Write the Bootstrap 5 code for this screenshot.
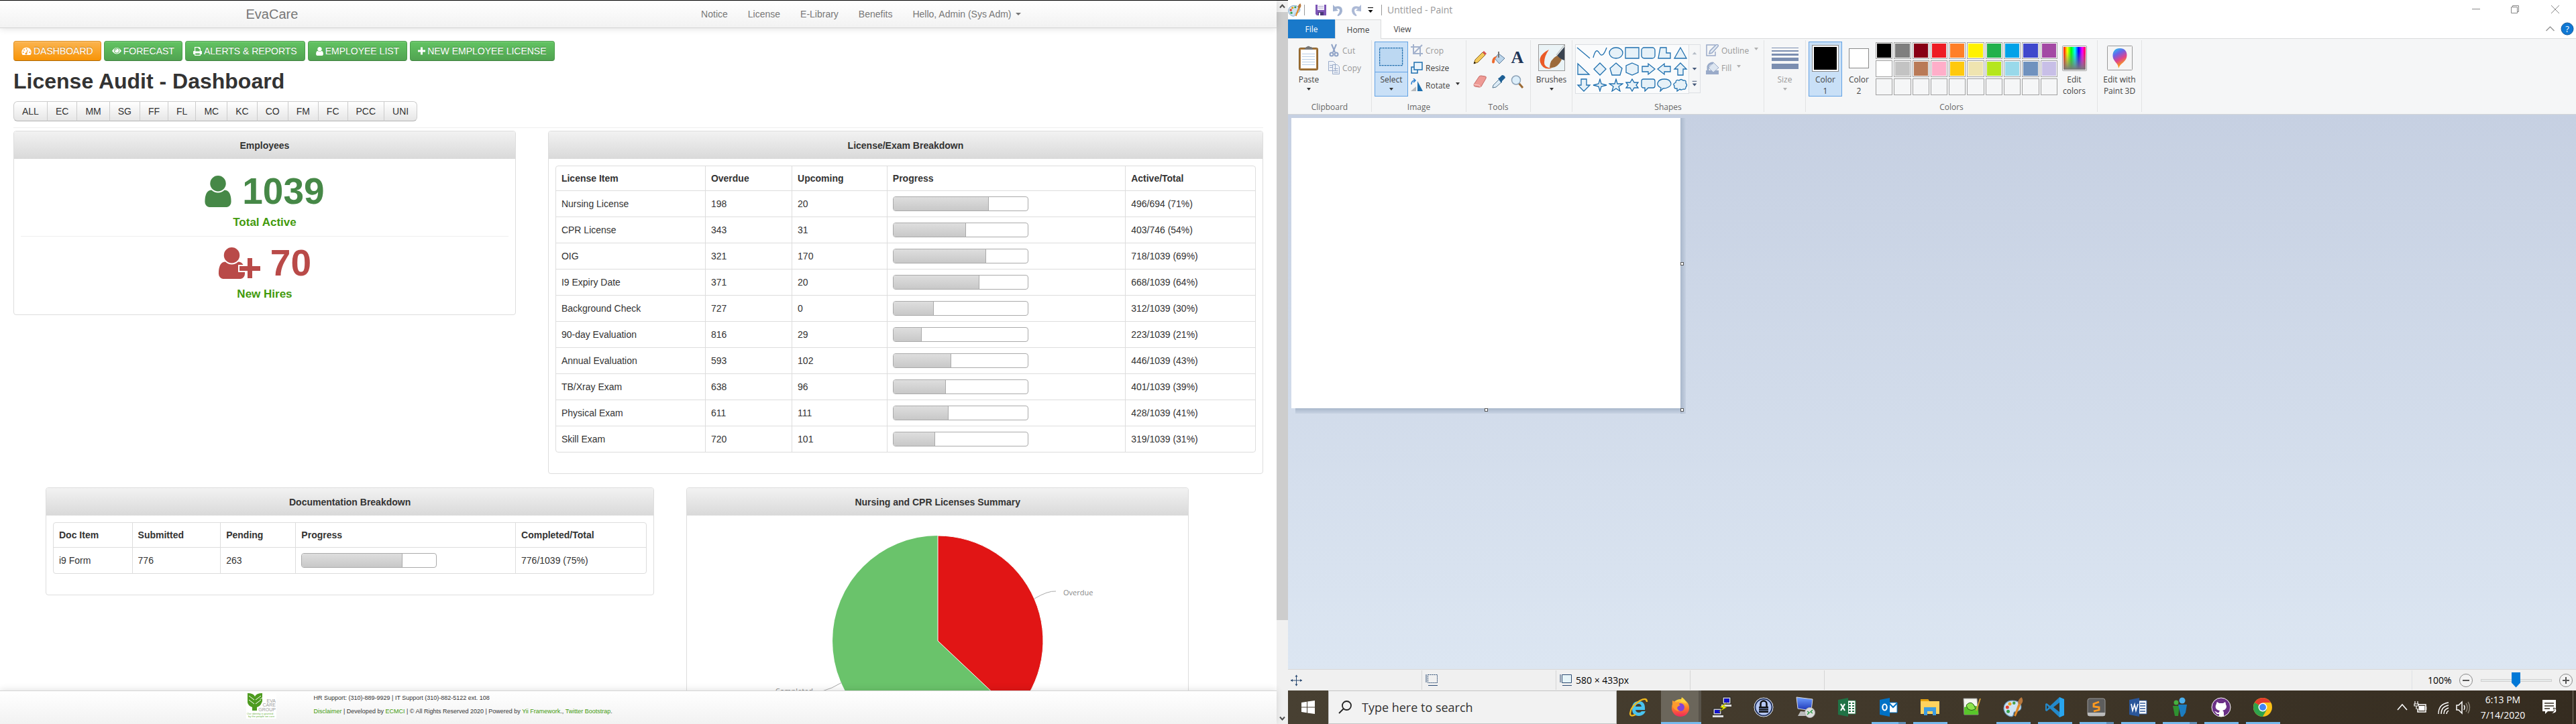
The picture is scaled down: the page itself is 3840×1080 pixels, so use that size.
<!DOCTYPE html>
<html lang="en">
<head>
<meta charset="utf-8">
<meta name="viewport" content="width=device-width, initial-scale=1">
<title>EvaCare - License Audit</title>
<link href="https://cdn.jsdelivr.net/npm/bootstrap@5.3.0/dist/css/bootstrap.min.css" rel="stylesheet">
<script src="https://cdn.jsdelivr.net/npm/bootstrap@5.3.0/dist/js/bootstrap.bundle.min.js"></script>
<style>
html,body{height:100%}
body{font:14px/20px "Liberation Sans",Arial,sans-serif;color:#333;overflow:hidden;background:#fff}
button{font:inherit;color:inherit}
svg{display:block;flex:none}
/* ---------- web application ---------- */
.site{flex:1 1 0;min-width:0;border-top:1px solid #000}
.site-col{min-width:0}
.topbar{height:41px;background:linear-gradient(#fff,#f2f2f2);border-bottom:1px solid #d4d4d4;box-shadow:0 1px 10px rgba(0,0,0,.12);position:relative;z-index:2;padding:0}
.shell{width:100%;max-width:1170px;margin:0 auto}
.topbar .navbar-brand{font-size:20px;line-height:20px;color:#777;padding:0;margin:0}
.topbar .navbar-nav .nav-link{color:#777;padding:10px 15px;font-size:14px}
.dropdown-toggle::after{border-width:4px 4px 0;margin-left:6px;vertical-align:3px}
.stage{overflow:hidden;min-height:0;padding:19px 20px 0}
.actions{gap:4px}
.btn-act{font-size:14px;line-height:20px;padding:4px 11px;border-radius:4px;color:#fff;border:1px solid #4b9e4b;border-bottom-color:#3d803d;background:linear-gradient(#62c462,#51a351);text-shadow:0 -1px 0 rgba(0,0,0,.25);display:flex;align-items:center;gap:3px;box-shadow:inset 0 1px 0 rgba(255,255,255,.2)}
.btn-act.now{background:linear-gradient(#fbb450,#f89406);border-color:#e08f1c;border-bottom-color:#ad6704}
.site h1{font-size:32px;line-height:40px;font-weight:700;margin:10px 0}
.btn-loc{font-size:14px;line-height:20px;padding:4px 12px;border:1px solid #ccc;border-bottom-color:#b3b3b3;background:linear-gradient(#fff,#e6e6e6);color:#333}
.rule{height:1px;background:#eee;margin:9px 0 4px}
.panels{gap:48px;margin-bottom:20px}
.pane{border:1px solid #ddd;border-radius:4px;background:#fff;min-width:0}
.pane h2{font-size:14px;line-height:20px;font-weight:700;margin:0;padding:11px 11px 10px;text-align:center;background:linear-gradient(#f2f2f2,#d9d9d9);border-radius:3px 3px 0 0}
.w-a{width:40.2%}.w-b{flex:1 1 0}.w-c{width:48.7%;margin-left:48px}
.count{font-size:55px;line-height:70px;font-weight:700;display:flex;justify-content:center;align-items:center;gap:16px}
.c-ok{color:#468847}.c-bad{color:#b94a48;gap:14px}
.cap{font-size:17px;line-height:20px;font-weight:700;color:#429a0c;text-align:center;margin-top:2px}
.emp{padding:13px 10px 20px}
.emp .rule{margin:10px 0 4px}
.holder{padding:10px 10px 31px}
.grid-t{width:100%;table-layout:fixed;border:1px solid #ddd;border-radius:4px;border-collapse:separate;border-spacing:0}
.grid-t th,.grid-t td{padding:8px;line-height:20px;border-left:1px solid #ddd;border-top:1px solid #ddd}
.grid-t th{border-top:0}
.grid-t th:first-child,.grid-t td:first-child{border-left:0}
.lic th:nth-child(1){width:21.3%}.lic th:nth-child(2){width:12.4%}.lic th:nth-child(3){width:13.6%}.lic th:nth-child(4){width:34.1%}
.doc th:nth-child(1){width:13.2%}.doc th:nth-child(2){width:14.9%}.doc th:nth-child(3){width:12.7%}.doc th:nth-child(4){width:37.1%}
.grid-t .progress{width:202px;height:22px;border:1px solid #aaa;border-radius:4px;background:#fff}
.grid-t .progress-bar{background:linear-gradient(#dedede,#c8c8c8);border-right:1px solid #aaa}
.foot{height:50px;background:linear-gradient(#fff,#f2f2f2);border-top:1px solid #d4d4d4;box-shadow:0 -1px 10px rgba(0,0,0,.12);position:relative;z-index:2;font-size:9px}
.foot p{margin:0;line-height:20px}
.foot a{color:#429a0c;text-decoration:none}
.scroller{width:17px;background:#f0f0f0}
.scroller i{background:#cdcdcd;flex:908 1 0}
.scroller b{flex:138 1 0}
/* ---------- paint window ---------- */
.paint{flex:1 1 0;min-width:0;font-family:"Open Sans","Noto Sans",sans-serif;font-size:12px;line-height:17px;color:#444}
.title-row{height:29px;background:#fff}
.title-row .ttl{font-size:14px;color:#999}
.v-sep{width:1px;height:16px;background:#999}
.tabs-row{height:28px;background:#fff;position:relative}
.tabs-row button{border:0;background:none;height:28px;padding:0;width:69px;text-align:center}
.tabs-row .t-file{width:70px;background:#1979ca;color:#fff}
.tabs-row .t-home{background:#f5f6f7;border:1px solid #dadbdc;border-bottom:0;height:29px}
.tabs-row .t-view{width:63px}
.ribbon{height:114px;background:#f5f6f7;border-top:1px solid #dadbdc;border-bottom:1px solid #d3d5d8}
.grp{margin:2px 0 3px;padding-top:2px;border-right:1px solid #e2e3e4;display:flex;flex-direction:column;justify-content:space-between}
.grp>footer{text-align:center;color:#666;line-height:14px}
.g-clip{width:125px}.g-image{width:141px}.g-tools{width:96px}.g-one{width:62px}.g-shapes{width:286px}.g-colors{width:435px}.g-3d{width:66px}
.clip-row{padding-left:6px}
.big{border:1px solid transparent;background:none;padding:0;width:50px;height:82px;display:flex;flex-direction:column;align-items:center;flex:none;text-align:center}
.g-3d .big{width:60px}
.big .pic{height:47px;display:flex;align-items:center;justify-content:center;flex:none}
.big.on{background:#c9e0f7;border-color:#62a2e4}
.big.cut-line .pic{border-bottom:1px solid #62a2e4;width:100%;height:45px;margin-bottom:2px}
.tri{width:0;height:0;border:3px solid transparent;border-top:4px solid #333;border-bottom:0;display:inline-block}
.big .tri{margin-top:4px}
.dim{color:#999}.dim .tri{border-top-color:#b0b0b0}
.sm{border:0;background:none;padding:0;height:26px;display:flex;align-items:center;gap:4px}
.sm .tri{margin:0 0 4px 4px}
.toolgrid{display:grid;grid-template-columns:repeat(3,28px);grid-auto-rows:36px;justify-content:center;padding-top:6px}
.toolgrid button,.shp button{border:0;background:none;padding:0;display:flex;align-items:center;justify-content:center}
.shp{display:grid;grid-template-columns:repeat(7,24px);grid-template-rows:repeat(3,24px);border:1px solid #dcdfe3;background:#fafbfc;width:170px;height:74px}
.shp svg{width:22px;height:20px;fill:#e6f1f8;stroke:#1e6fae;stroke-width:1.3}
.shp-s{width:17px;height:73px;border:1px solid #dcdfe3;border-left:0}
.sw{border:1px solid #8a8a8a;padding:2px;background:#fff}
.sw.s-lg{width:40px;height:40px}.sw.s-md{width:30px;height:30px}
.sw i{display:block;width:100%;height:100%;background:#000}
.pal{display:grid;grid-template-columns:repeat(10,1fr);grid-auto-rows:25px;gap:2px;width:271px;padding-top:1px}
.pal button{border:1px solid #a0a0a0;padding:1px;background:#fff;height:25px}
.pal button i{display:block;width:100%;height:100%}
.pal .none{background:#f5f6f7}
.desk{background:linear-gradient(#c6d0e2,#dce6f2);min-height:0;padding:5px}
.sheet{position:relative;width:580px;height:433px;background:#fff}
.sheet::before{content:"";position:absolute;left:100%;top:0;bottom:-8px;width:8px;background:linear-gradient(90deg,#a9b7cb,#c5d0e1)}
.sheet::after{content:"";position:absolute;top:100%;left:6px;right:0;height:8px;background:linear-gradient(#a9b7cb,#c8d3e3)}
.knob{position:absolute;width:5px;height:5px;border:1px solid #555;background:#fff;z-index:1}
.k-r{left:100%;top:215px}.k-b{top:100%;left:288px}.k-c{left:100%;top:100%}
.status{height:32px;background:#f0f0f0;border-top:1px solid #d7d7d7;color:#000;font-size:14px}
.status>div{border-right:1px solid #d5d5d5;width:200px;margin:1px 0;display:flex;align-items:center;gap:5px;padding-left:4px}
.status>.zoomer{border-right:0;width:245px;padding:0 5px 0 23px;gap:0;justify-content:space-between}
.zoomer button{border:0;background:none;padding:0}
.zoomer input{appearance:none;width:106px;height:24px;background:none;margin:0}
.zoomer input::-webkit-slider-runnable-track{height:4px;background:#e7eaea;border:1px solid #d0d0d0}
.zoomer input::-webkit-slider-thumb{appearance:none;width:13px;height:23px;margin-top:-11px;background:#0078d7;clip-path:polygon(0 0,100% 0,100% 70%,50% 100%,0 70%)}
.task{height:50px;background:linear-gradient(90deg,#484032,#41382a 50%,#352c20);color:#fff}
.task button{border:0;background:none;padding:0;width:62px;display:flex;justify-content:center;align-items:center;position:relative}
.task .start{width:60px}
.task .find{width:430px;margin-right:2px;background:#f2f2f2;border:1px solid #c4c4c4;color:#333;padding-left:14px;gap:15px}
.find input{border:0;background:none;font-size:18px;line-height:24px;padding:0;flex:1;min-width:0;outline:0;color:#333}
.find input::placeholder{color:#333;opacity:1}
.task .run::after,.task .multi::after{content:"";position:absolute;bottom:0;left:6px;width:51px;height:3px;background:#76b9ed}
.task .multi::after{background:linear-gradient(90deg,#76b9ed 40px,#5f8fb8 40px)}
.task .front{background:linear-gradient(90deg,transparent 2px,#6b665b 2px,#6b665b 58px,#58534a 58px)}
.task .front::after{left:2px;width:60px}
.task .clock{width:76px;padding-top:2px;font-size:14px;line-height:23px;text-align:center}
.task .tray{width:auto}
.peek{width:5px;border-left:1px solid #7d766a;margin-left:4px}
.ov{overflow:visible}
</style>
</head>
<body class="d-flex">

<svg width="0" height="0" class="position-absolute" aria-hidden="true">
 <defs>
  <symbol id="user" viewBox="0 128 1280 1536"><path d="M1280 1399q0 109-62.5 187t-150.5 78h-854q-88 0-150.5-78t-62.5-187q0-85 8.500-160.500t31.500-152 58.500-131 94-89 134.500-34.500q131 128 313 128t313-128q76 0 134.500 34.500t94 89 58.500 131 31.500 152 8.500 160.500zm-256-887q0 159-112.500 271.500t-271.500 112.500-271.500-112.500-112.500-271.500 112.500-271.500 271.500-112.500 271.500 112.500 112.500 271.500z"/></symbol>
  <linearGradient id="lg1" x2="0" y2="1"><stop stop-color="#6f9fff"/><stop offset="1" stop-color="#1b33b5"/></linearGradient>
  <linearGradient id="ff" x2="0" y2="1"><stop stop-color="#ffd83c"/><stop offset=".5" stop-color="#ff7a2a"/><stop offset="1" stop-color="#f0255e"/></linearGradient>
  <linearGradient id="rb"><stop stop-color="#f00"/><stop offset=".17" stop-color="#ff0"/><stop offset=".35" stop-color="#0f0"/><stop offset=".52" stop-color="#0ff"/><stop offset=".68" stop-color="#00f"/><stop offset=".85" stop-color="#f0f"/><stop offset="1" stop-color="#f03"/></linearGradient>
  <linearGradient id="gy" x2="0" y2="1"><stop offset=".2" stop-color="#888" stop-opacity="0"/><stop offset="1" stop-color="#777"/></linearGradient>
  <linearGradient id="p3" x2=".4" y2="1"><stop stop-color="#20d5ee"/><stop offset=".35" stop-color="#6a63ea"/><stop offset=".65" stop-color="#e0438b"/><stop offset="1" stop-color="#ffb400"/></linearGradient>
  <symbol id="palette" viewBox="0 0 24 24"><path d="M11 4C4 4 0 9 1 15c1 5 5 8 9 8 3 0 2-3 3-5s6 0 8-4C23 8 18 4 11 4z" fill="#cfe3f3" stroke="#6e9cc0"/><circle cx="5" cy="12" r="2" fill="#e23c2e"/><circle cx="8" cy="8" r="2" fill="#e9a21e"/><circle cx="13" cy="7" r="1.800" fill="#43a047"/><circle cx="6" cy="17" r="2" fill="#33a04a"/><path d="M18 8l3 1-6 14-2-1z" fill="#e08a2a"/><path d="M18 8c-1-3 1-6 4-8 2 3 2 6-1 9z" fill="#b9783d"/></symbol>
 </defs>
</svg>

<section class="site d-flex">
 <div class="site-col d-flex flex-column flex-grow-1">
  <nav class="topbar navbar navbar-expand flex-shrink-0">
   <div class="shell d-flex align-items-center justify-content-between">
    <a class="navbar-brand" href="#">EvaCare</a>
    <ul class="navbar-nav">
     <li class="nav-item"><a class="nav-link" href="#">Notice</a></li>
     <li class="nav-item"><a class="nav-link" href="#">License</a></li>
     <li class="nav-item"><a class="nav-link" href="#">E-Library</a></li>
     <li class="nav-item"><a class="nav-link" href="#">Benefits</a></li>
     <li class="nav-item dropdown"><a class="nav-link dropdown-toggle" href="#" data-bs-toggle="dropdown">Hello, Admin (Sys Adm)</a></li>
    </ul>
   </div>
  </nav>

  <main class="stage flex-grow-1">
   <div class="actions d-flex">
    <button class="btn-act now"><svg width="15" height="13" viewBox="0 0 15 13"><path d="M1.500 12a7.200 7.200 0 1 1 12 0z" fill="#fff"/><g fill="#f9a12a"><circle cx="2.700" cy="8" r="1"/><circle cx="4" cy="4.500" r="1"/><circle cx="7.500" cy="3" r="1"/><circle cx="12.300" cy="8" r="1"/><circle cx="7" cy="10" r="1.600"/><path d="M6.700 9.500L9 4.500l.8.300-1.800 5z"/></g></svg>DASHBOARD</button>
    <button class="btn-act"><svg width="14" height="12" viewBox="0 0 14 12"><path d="M0 6q7-10 14 0q-7 9-14 0z" fill="#fff"/><circle cx="7" cy="5.500" r="3.700" fill="none" stroke="#5ab55a"/><path d="M5 5.500a2 2 0 0 1 2-2" fill="none" stroke="#5ab55a"/></svg>FORECAST</button>
    <button class="btn-act"><svg width="13" height="13" viewBox="0 0 13 13"><path d="M2 0h7l2 2v4h1q1 0 1 1v4h-2v2H2v-2H0V7q0-1 1-1h1z" fill="#fff"/><path d="M3.200 1.200H8V3h1.800v3.500H3.200zM3.200 9.500h6.600v2.300H3.200z" fill="#58b158"/></svg>ALERTS &amp; REPORTS</button>
    <button class="btn-act"><svg width="11" height="13" fill="#fff"><use href="#user"/></svg>EMPLOYEE LIST</button>
    <button class="btn-act"><svg width="11" height="12" viewBox="0 0 11 12"><path d="M4 .5h3V4.500h4v3H7v4H4v-4H0v-3h4z" fill="#fff"/></svg>NEW EMPLOYEE LICENSE</button>
   </div>
   <h1>License Audit - Dashboard</h1>
   <div class="btn-group">
    <button class="btn btn-loc">ALL</button><button class="btn btn-loc">EC</button><button class="btn btn-loc">MM</button><button class="btn btn-loc">SG</button><button class="btn btn-loc">FF</button><button class="btn btn-loc">FL</button><button class="btn btn-loc">MC</button><button class="btn btn-loc">KC</button><button class="btn btn-loc">CO</button><button class="btn btn-loc">FM</button><button class="btn btn-loc">FC</button><button class="btn btn-loc">PCC</button><button class="btn btn-loc">UNI</button>
   </div>
   <div class="rule"></div>

   <div class="panels d-flex align-items-start">
    <section class="pane w-a">
     <h2>Employees</h2>
     <div class="emp">
      <div class="count c-ok"><svg width="40" height="47" fill="currentColor"><use href="#user"/></svg><span>1039</span></div>
      <div class="cap">Total Active</div>
      <div class="rule"></div>
      <div class="count c-bad"><svg width="64" height="47" viewBox="0 0 64 47" fill="currentColor"><svg width="41" height="47"><use href="#user"/></svg><path d="M43 15h9v12h12v9H52v11h-9V36H31v-9h12z" stroke="#fff" stroke-width="2"/></svg><span>70</span></div>
      <div class="cap">New Hires</div>
     </div>
    </section>
    <section class="pane w-b">
     <h2>License/Exam Breakdown</h2>
     <div class="holder">
      <table class="grid-t lic">
       <thead><tr><th>License Item</th><th>Overdue</th><th>Upcoming</th><th>Progress</th><th>Active/Total</th></tr></thead>
       <tbody>
        <tr><td>Nursing License</td><td>198</td><td>20</td><td><div class="progress"><div class="progress-bar" style="width:71%"></div></div></td><td>496/694 (71%)</td></tr>
        <tr><td>CPR License</td><td>343</td><td>31</td><td><div class="progress"><div class="progress-bar" style="width:54%"></div></div></td><td>403/746 (54%)</td></tr>
        <tr><td>OIG</td><td>321</td><td>170</td><td><div class="progress"><div class="progress-bar" style="width:69%"></div></div></td><td>718/1039 (69%)</td></tr>
        <tr><td>I9 Expiry Date</td><td>371</td><td>20</td><td><div class="progress"><div class="progress-bar" style="width:64%"></div></div></td><td>668/1039 (64%)</td></tr>
        <tr><td>Background Check</td><td>727</td><td>0</td><td><div class="progress"><div class="progress-bar" style="width:30%"></div></div></td><td>312/1039 (30%)</td></tr>
        <tr><td>90-day Evaluation</td><td>816</td><td>29</td><td><div class="progress"><div class="progress-bar" style="width:21%"></div></div></td><td>223/1039 (21%)</td></tr>
        <tr><td>Annual Evaluation</td><td>593</td><td>102</td><td><div class="progress"><div class="progress-bar" style="width:43%"></div></div></td><td>446/1039 (43%)</td></tr>
        <tr><td>TB/Xray Exam</td><td>638</td><td>96</td><td><div class="progress"><div class="progress-bar" style="width:39%"></div></div></td><td>401/1039 (39%)</td></tr>
        <tr><td>Physical Exam</td><td>611</td><td>111</td><td><div class="progress"><div class="progress-bar" style="width:41%"></div></div></td><td>428/1039 (41%)</td></tr>
        <tr><td>Skill Exam</td><td>720</td><td>101</td><td><div class="progress"><div class="progress-bar" style="width:31%"></div></div></td><td>319/1039 (31%)</td></tr>
       </tbody>
      </table>
     </div>
    </section>
   </div>

   <div class="panels d-flex align-items-start">
    <section class="pane w-c">
     <h2>Documentation Breakdown</h2>
     <div class="holder">
      <table class="grid-t doc">
       <thead><tr><th>Doc Item</th><th>Submitted</th><th>Pending</th><th>Progress</th><th>Completed/Total</th></tr></thead>
       <tbody><tr><td>i9 Form</td><td>776</td><td>263</td><td><div class="progress"><div class="progress-bar" style="width:75%"></div></div></td><td>776/1039 (75%)</td></tr></tbody>
      </table>
     </div>
    </section>
    <section class="pane w-a">
     <h2>Nursing and CPR Licenses Summary</h2>
     <svg class="mx-auto" width="560" height="400" viewBox="94 0 560 400" font-family="Open Sans,sans-serif" font-size="11" fill="#888">
      <circle cx="374" cy="187" r="157" fill="#6ac36b"/>
      <path d="M374 187V30A157 157 0 0 1 488.200 294.700z" fill="#e11515" stroke="#fff"/>
      <path d="M518 124q20-12 32-11M231 249q-14 9-32 14" fill="none" stroke="#aaa"/>
      <text x="561" y="119">Overdue</text><text x="188" y="266" text-anchor="end">Completed</text>
     </svg>
    </section>
   </div>
  </main>

  <footer class="foot flex-shrink-0">
   <div class="shell d-flex">
    <svg width="45" height="42" viewBox="0 0 45 42" font-family="Liberation Sans,sans-serif"><rect width="45" height="39" y="2" fill="#fff"/><path d="M2 3q9 0 11 5Q15 3 24 3v5q0 3-5 4 5 0 5-2v4q0 5-5 5 3 0 4-2-1 5-7 7v5H9v-5q-6-2-7-7z" fill="#4d9b1f"/><path d="M4 7l8 6M4 13l8 6M22 7l-8 6M22 13l-8 6" stroke="#fff" fill="none"/><g font-size="7" fill="#999" text-anchor="end"><text x="44" y="17">EVA</text><text x="44" y="23">CARE</text><text x="44" y="30">GROUP</text></g><g font-size="4" fill="#6cb33f"><text x="1" y="35">Our identity is granted</text><text x="3" y="39">by the people we care</text></g></svg>
    <div class="ms-5 ps-2">
     <p>HR Support: (310)-889-9929 | IT Support (310)-882-5122 ext. 108</p>
     <p><a href="#">Disclaimer</a> | Developed by <a href="#">ECMCI</a> | © All Rights Reserved 2020 | Powered by <a href="#">Yii Framework</a>., <a href="#">Twitter Bootstrap</a>.</p>
    </div>
   </div>
  </footer>
 </div>
 <div class="scroller d-flex flex-column">
  <svg width="17" height="17" fill="none" stroke="#505050" stroke-width="2"><path d="M5 10.500l3.500-4 3.500 4"/></svg><i></i><b></b>
  <svg width="17" height="17" fill="none" stroke="#505050" stroke-width="2"><path d="M5 6.500l3.500 4 3.500-4"/></svg>
 </div>
</section>

<section class="paint d-flex flex-column">
 <header class="title-row d-flex align-items-center flex-shrink-0">
  <svg width="20" height="20"><use href="#palette"/></svg>
  <span class="v-sep ms-1 me-3"></span>
  <svg width="16" height="16"><path d="M0 0h16v16H2l-2-2z" fill="#7d55b5"/><path d="M3 0h10v8H3z" fill="#f4f2fa"/><path d="M4 2.500h8M4 5h8" stroke="#b8b2d0"/><path d="M4 11h8v5H4z" fill="#4a3a78"/><path d="M5 12h2v4H5z" fill="#fff"/></svg>
  <svg class="ms-2" width="19" height="18" fill="#a3b3d1"><path d="M2 1l3 3q11-3 11 6 0 5-6 8-2 0-1-2 3-3 3-6 0-4-5-3l3 3-8 1z"/></svg>
  <svg class="ms-2" width="19" height="18" fill="#adbad6"><path d="M17 1l-3 3Q3 1 3 10q0 5 6 8 2 0 1-2-3-3-3-6 0-4 5-3l-3 3 8 1z"/></svg>
  <svg class="ms-1" width="16" height="12"><path d="M4 2.500h8" stroke="#000"/><path d="M4.500 6h7L8 10z"/></svg>
  <span class="v-sep ms-2 me-2"></span>
  <span class="ttl flex-grow-1">Untitled - Paint</span>
  <svg width="155" height="29" fill="none" stroke="#888"><path d="M0 13.500h12M58.500 10.500h9v9h-9zM60.500 10v-1.500h9v9H68M118 8l12 12M130 8l-12 12"/></svg>
 </header>
 <nav class="tabs-row d-flex flex-shrink-0 align-items-start">
  <button class="t-file">File</button><button class="t-home">Home</button><button class="t-view">View</button>
  <svg class="ms-auto" width="46" height="28"><path d="M1.500 17l6-6 6 6" fill="none" stroke="#999" stroke-width="1.500"/><circle cx="33" cy="14" r="9" fill="#0f78d4" stroke="#15599a"/><text x="33" y="19" fill="#fff" font-size="13" text-anchor="middle">?</text></svg>
 </nav>

 <div class="ribbon d-flex flex-shrink-0">
  <div class="grp g-clip">
   <div class="clip-row d-flex">
    <button class="big"><span class="pic"><svg width="32" height="38"><rect x="1.500" y="3.500" width="28" height="33" rx="2" fill="#a8783e" stroke="#80571f"/><path d="M4 6h23v28H4z" fill="#fff"/><path d="M6 12.500h19M6 16.500h19M6 20.500h19M6 24.500h19M6 28.500h19" stroke="#b8cde4"/><path d="M9 6h14l-3-4h-2a3 3 0 0 0-5 0h-1z" fill="#777"/></svg></span>Paste<span class="tri"></span></button>
    <div class="dim ps-1">
     <button class="sm"><svg width="17" height="20" fill="none" stroke="#8ea2c6" stroke-width="2"><path d="M5 1l5 12M12 1L7 13"/><circle cx="5" cy="16" r="2.500"/><circle cx="12" cy="16" r="2.500"/></svg>Cut</button>
     <button class="sm"><svg width="17" height="20" fill="#eef2f8" stroke="#9aabc9"><path d="M.5.500h7l3 3v11H.5zM6.500 5.500h7l3 3v11h-10z"/><path d="M2 6.500h4M2 9.500h4M8.500 11.500h6M8.500 14.500h6M8.500 17h6"/></svg>Copy</button>
    </div>
   </div>
   <footer>Clipboard</footer>
  </div>
  <div class="grp g-image">
   <div class="d-flex gap-1 ps-1">
    <button class="big on cut-line"><span class="pic"><svg width="36" height="28" fill="#bcd8f2" stroke="#1f6cab" stroke-width="1.300" stroke-dasharray="3 1"><path d="M.6.600h34v26H.6z"/></svg></span>Select<span class="tri"></span></button>
    <div>
     <button class="sm dim"><svg width="18" height="18" fill="none" stroke="#a3b2cd" stroke-width="2"><path d="M4 0v14h14M0 4h14v14M4 14L17 1"/></svg>Crop</button>
     <button class="sm"><svg width="18" height="18" fill="#eaf4fb" stroke="#1e6fae" stroke-width="1.500"><path d="M1 8h9v9H1z"/><path d="M5 1h12v11H5z"/></svg>Resize</button>
     <button class="sm"><svg width="18" height="20"><path d="M10 4v15h8z" fill="#1e6fae"/><path d="M8 12v7H0z" fill="#b5b8bc"/><path d="M1 9q0-6 5-6M4 0l3 3-3 3" fill="none" stroke="#2a7fd0" stroke-width="1.500"/></svg>Rotate<span class="tri"></span></button>
    </div>
   </div>
   <footer>Image</footer>
  </div>
  <div class="grp g-tools">
   <div class="toolgrid">
    <button aria-label="Pencil"><svg width="20" height="20"><path d="M1 19l2-6L14 2l4 4L7 17z" fill="#f3c95b" stroke="#8a6a2a"/><path d="M14 2l2-2 4 4-2 2z" fill="#d9534f"/><path d="M1 19l1-3 2 2z"/></svg></button>
    <button aria-label="Fill with color"><svg width="20" height="20"><path d="M10 4l9 7-8 8-7-8z" fill="#bcd5ea" stroke="#5b7c9c"/><path d="M10 1v9" stroke="#777" stroke-width="2"/><path d="M0 17q0-9 8-9-4 3-4 9-2 3-4 0z" fill="#ed6a2d"/></svg></button>
    <button aria-label="Text"><svg class="ov" width="20" height="30"><text x="10" y="23" font-family="Liberation Serif,serif" font-weight="700" font-size="26" text-anchor="middle" fill="#1d3557">A</text></svg></button>
    <button aria-label="Eraser"><svg width="20" height="20"><path d="M1 14L9 2q1-1 3-1l6 1q2 0 1 3l-7 12q-1 1-3 1l-6-1q-2 0-2-3z" fill="#ee9a95" stroke="#c46a66"/><path d="M1 14l8 1 2 3" fill="none" stroke="#fbd2cf"/></svg></button>
    <button aria-label="Color picker"><svg width="20" height="20"><path d="M1 19l1-4 9-9 4 4-9 8z" fill="#dcebf6" stroke="#55778f"/><path d="M9 5l2-1 4-4q4 0 5 4l-5 5-1 3z" fill="#1d5f94"/></svg></button>
    <button aria-label="Magnifier"><svg width="20" height="20"><path d="M12 12l6 7" stroke="#9b6a34" stroke-width="3"/><circle cx="8" cy="7.500" r="6.500" fill="#dceefa" stroke="#8da3b8" stroke-width="1.500"/></svg></button>
   </div>
   <footer>Tools</footer>
  </div>
  <div class="grp g-one align-items-center">
   <button class="big"><span class="pic"><svg width="40" height="41"><rect x=".5" y=".5" width="39" height="39" fill="#eaf3f6" stroke="#999"/><path d="M16 8Q0 16 3 27q4 12 17 9-12-2-11-9 0-9 7-19z" fill="#ea5a27"/><path d="M39 4v20l-8-3-3-4z" fill="#39424f"/><path d="M28 17l7 6q-7 14-18 12 0-12 11-18z" fill="#9c6b3b"/><path d="M39 1L27 16" stroke="#aaa"/></svg></span>Brushes<span class="tri"></span></button>
  </div>
  <div class="grp g-shapes">
   <div class="d-flex ps-1">
    <div class="shp mt-1">
     <button><svg viewBox="0 0 22 20"><path d="M1 2l19 16"/></svg></button><button><svg viewBox="0 0 22 20"><path d="M1 17q4-16 9-7t11-8" fill="none"/></svg></button><button><svg viewBox="0 0 22 20"><ellipse cx="11" cy="10" rx="10" ry="8"/></svg></button><button><svg viewBox="0 0 22 20"><path d="M1 2h20v16H1z"/></svg></button><button><svg viewBox="0 0 22 20"><rect x="1" y="2" width="20" height="16" rx="4"/></svg></button><button><svg viewBox="0 0 22 20"><path d="M5 2h9v8h6v8H2z"/></svg></button><button><svg viewBox="0 0 22 20"><path d="M11 2l9 16H2z"/></svg></button>
     <button><svg viewBox="0 0 22 20"><path d="M2 2l17 16H2z"/></svg></button><button><svg viewBox="0 0 22 20"><path d="M11 1l9 9-9 9-9-9z"/></svg></button><button><svg viewBox="0 0 22 20"><path d="M11 1l9 8-3 10H5L2 9z"/></svg></button><button><svg viewBox="0 0 22 20"><path d="M11 1l9 4v10l-9 4-9-4V5z"/></svg></button><button><svg viewBox="0 0 22 20"><path d="M2 6h9V2l10 8-10 8v-4H2z"/></svg></button><button><svg viewBox="0 0 22 20"><path d="M20 6h-9V2L1 10l10 8v-4h9z"/></svg></button><button><svg viewBox="0 0 22 20"><path d="M11 1l9 9h-5v9H7v-9H2z"/></svg></button>
     <button><svg viewBox="0 0 22 20"><path d="M11 19l9-9h-5V1H7v9H2z"/></svg></button><button><svg viewBox="0 0 22 20"><path d="M11 1l2 7 8 2-8 2-2 7-2-7-8-2 8-2z"/></svg></button><button><svg viewBox="0 0 22 20"><path d="M11 1l2 7h8l-6 4 2 7-6-4-6 4 2-7-6-4h8z"/></svg></button><button><svg viewBox="0 0 22 20"><path d="M11 1l3 5h6l-3 4 3 4h-6l-3 5-3-5H2l3-4-3-4h6z"/></svg></button><button><svg viewBox="0 0 22 20"><path d="M4 1h14q3 0 3 3v7q0 3-3 3h-7l-5 5v-5H4q-3 0-3-3V4q0-3 3-3z"/></svg></button><button><svg viewBox="0 0 22 20"><path d="M6 14C-3 10 1 1 11 1s13 9 6 12q-3 2-8 2l-4 4z"/></svg></button><button><svg viewBox="0 0 22 20"><path d="M4 6q0-5 5-3 3-3 6 0 5-1 4 4 3 3 0 6 0 4-4 3-3 2-5 0l-4 3v-4q-5 1-4-4-3-3 2-5z"/></svg></button>
    </div>
    <svg class="shp-s mt-1" viewBox="0 0 17 73"><path d="M5 14h7l-3.500-4z" fill="#b5bcc6"/><path d="M5 35h7l-3.500 4zM5 60h7l-3.500 4zM5 56h7v1H5z" fill="#45597a"/></svg>
    <div class="dim ps-2">
     <button class="sm"><svg width="19" height="18" fill="none" stroke="#9aabc9" stroke-width="1.500"><path d="M14 1H1v16h13v-6"/><path d="M5 14l1-4L16 0l3 2L9 13z" fill="#e4ebf4"/></svg>Outline<span class="tri"></span></button>
     <button class="sm"><svg width="19" height="20"><path d="M0 14h19v6H0z" fill="#9aabc9"/><path d="M11 2l8 8-8 7-7-7z" fill="#dde6f1" stroke="#9aabc9"/><path d="M3 14V8q2-5 8-5" fill="none" stroke="#9aabc9" stroke-width="3"/></svg>Fill<span class="tri"></span></button>
    </div>
   </div>
   <footer>Shapes</footer>
  </div>
  <div class="grp g-one align-items-center">
   <button class="big dim"><span class="pic"><svg width="40" height="34" fill="#7b8eb0"><path d="M0 1h40v1H0zM0 5h40v2H0zM0 10h40v3H0zM0 16h40v5H0zM0 25h40v8H0z"/></svg></span>Size<span class="tri"></span></button>
  </div>
  <div class="grp g-colors">
   <div class="d-flex ps-1">
    <button class="big on"><span class="pic"><span class="sw s-lg"><i></i></span></span>Color<br>1</button>
    <button class="big"><span class="pic"><span class="sw s-md"></span></span>Color<br>2</button>
    <div class="pal">
     <button><i style="background:#000"></i></button><button><i style="background:#7f7f7f"></i></button><button><i style="background:#880015"></i></button><button><i style="background:#ed1c24"></i></button><button><i style="background:#ff7f27"></i></button><button><i style="background:#fff200"></i></button><button><i style="background:#22b14c"></i></button><button><i style="background:#00a2e8"></i></button><button><i style="background:#3f48cc"></i></button><button><i style="background:#a349a4"></i></button>
     <button><i style="background:#fff"></i></button><button><i style="background:#c3c3c3"></i></button><button><i style="background:#b97a57"></i></button><button><i style="background:#ffaec9"></i></button><button><i style="background:#ffc90e"></i></button><button><i style="background:#efe4b0"></i></button><button><i style="background:#b5e61d"></i></button><button><i style="background:#99d9ea"></i></button><button><i style="background:#7092be"></i></button><button><i style="background:#c8bfe7"></i></button>
     <button class="none"></button><button class="none"></button><button class="none"></button><button class="none"></button><button class="none"></button><button class="none"></button><button class="none"></button><button class="none"></button><button class="none"></button><button class="none"></button>
    </div>
    <button class="big"><span class="pic"><svg width="37" height="38"><rect x=".5" y=".5" width="36" height="37" rx="1" fill="#fff" stroke="#999"/><path d="M2 2h33v34H2z" fill="url(#rb)"/><path d="M2 2h33v34H2z" fill="url(#gy)"/></svg></span>Edit<br>colors</button>
   </div>
   <footer>Colors</footer>
  </div>
  <div class="grp g-3d align-items-center">
   <button class="big"><span class="pic"><svg width="38" height="38"><rect x=".5" y=".5" width="37" height="36" rx="1" fill="#f5f5f5" stroke="#999"/><path d="M19 4c8 0 12 6 10 14-2 7-9 8-12 16 0-7-5-8-8-15C7 10 11 4 19 4z" fill="url(#p3)"/></svg></span>Edit with<br>Paint 3D</button>
  </div>
 </div>

 <main class="desk flex-grow-1"><div class="sheet"><span class="knob k-r"></span><span class="knob k-b"></span><span class="knob k-c"></span></div></main>

 <div class="status d-flex flex-shrink-0">
  <div><svg width="17" height="18" fill="#2b4a72" stroke="#2b4a72"><path d="M8.500 1v16M0 9h17" /><path d="M6.500 3.500h4l-2-3zM6.500 14.500h4l-2 3zM3 7v4L0 9zM14 7v4l3-2z" stroke="none"/></svg></div>
  <div><svg width="20" height="18" fill="none" stroke="#2b4a72"><path d="M2 0v12M5 16.500h14"/><path d="M4.500.500h14v12h-14z" stroke-dasharray="2 1"/></svg></div>
  <div><svg width="20" height="18" fill="none" stroke="#2b4a72"><path d="M2 0v12M5 16.500h14"/><path d="M4.500.500h14v12h-14z" fill="#e6f4f8"/></svg><span>580 × 433px</span></div>
  <div></div>
  <div class="flex-grow-1 border-0"></div>
  <div class="zoomer border-start">
   <label for="zm">100%</label>
   <button aria-label="Zoom out"><svg width="20" height="22"><circle cx="10" cy="11" r="9.500" fill="#f3f3f3" stroke="#888"/><path d="M5 11h10" stroke="#555" stroke-width="2"/></svg></button>
   <input id="zm" type="range" min="0" max="100" value="50">
   <button aria-label="Zoom in"><svg width="20" height="22"><circle cx="10" cy="11" r="9.500" fill="#f3f3f3" stroke="#888"/><path d="M5 11h10M10 6v10" stroke="#555" stroke-width="2"/></svg></button>
  </div>
 </div>

 <div class="task d-flex flex-shrink-0">
  <button class="start" aria-label="Start"><svg width="20" height="20" fill="#fff"><path d="M0 3l8-1.200V9.500H0zM9 1.600L20 0v9.500H9zM0 10.500h8v7.700L0 17zM9 10.500h11V20L9 18.400z"/></svg></button>
  <div class="find d-flex align-items-center"><svg width="20" height="20" fill="none" stroke="#222" stroke-width="1.800"><circle cx="12.500" cy="7.500" r="6.500"/><path d="M8 12l-7 7"/></svg><input type="text" aria-label="Search" placeholder="Type here to search"></div>
  <button aria-label="Internet Explorer"><svg width="30" height="30"><path d="M23 19H10q1 4 5 4 3 0 4-2h6q-3 7-10 7Q5 28 5 17T15 6q10 0 9 13zM10 14h9q-1-4-4-4-4 0-5 4z" fill="#49c3ef"/><path d="M27 7q0-7-10-2Q3 13 2 24q0 6 8 2" fill="none" stroke="#f0b81e" stroke-width="2.300"/></svg></button>
  <button aria-label="Firefox" class="front run"><svg width="30" height="32"><circle cx="15" cy="17" r="13" fill="url(#ff)"/><path d="M17 1q6 4 7 9l-9-2z" fill="#ffd53c"/><circle cx="15" cy="16" r="6" fill="#8343d6"/><path d="M3 6l6 3 4-1q-1 4 2 5-4 1-5 4 1 4 5 5-9 0-12-8z" fill="#ff9b2e"/></svg></button>
  <button aria-label="PuTTY"><svg width="30" height="32"><path d="M16 1h12v10H16zM2 18h12v9H2z" fill="#ccc" stroke="#222"/><path d="M18 3h8v6h-8zM4 20h8v5H4z" fill="#11c"/><path d="M14 12h15v3H14zM1 28h16v3H1z" fill="#ddd"/><path d="M22 9l-10 7 5 1-7 6 12-7-5-1z" fill="#ff0" stroke="#660" stroke-width=".5"/></svg></button>
  <button aria-label="KeePass"><svg width="30" height="32"><circle cx="15" cy="16" r="14" fill="#b5c6f2" stroke="#fff"/><circle cx="15" cy="16" r="12.500" fill="none" stroke="#23345e" stroke-width="2"/><path d="M8 15h14v9H8z" fill="#111"/><path d="M10.500 15v-4a4.500 4.500 0 0 1 9 0v4" fill="none" stroke="#111" stroke-width="2.500"/><path d="M8 18h14M8 21h14" stroke="#7f95cc"/></svg></button>
  <button aria-label="Remote Desktop"><svg width="30" height="32"><path d="M2 1l24 3-2 17L4 18z" fill="url(#lg1)" stroke="#ddd"/><path d="M8 22l10 1 2 6H4z" fill="#bbb"/><circle cx="22" cy="24" r="7.500" fill="#ddd" stroke="#aaa"/><path d="M18 22l3 2-3 3M26 20l-3 3 3 2" fill="none" stroke="#2d9b45" stroke-width="1.500"/></svg></button>
  <button aria-label="Excel"><svg width="28" height="28"><path d="M14 4h13v20H14z" fill="#fff" stroke="#207245"/><path d="M17 7h3v2h-3zm5 0h3v2h-3zm-5 4h3v2h-3zm5 0h3v2h-3zm-5 4h3v2h-3zm5 0h3v2h-3zm-5 4h3v2h-3zm5 0h3v2h-3z" fill="#207245"/><path d="M1 3l15-3v28L1 25z" fill="#207245"/><path d="M5 9l6 10M11 9L5 19" stroke="#fff" stroke-width="2.200"/></svg></button>
  <button aria-label="Outlook" class="multi"><svg width="28" height="28"><path d="M14 7h13v15H14z" fill="#fff" stroke="#0072c6"/><path d="M15 8l6 6 6-6" fill="none" stroke="#0072c6" stroke-width="2"/><path d="M1 3l15-3v28L1 25z" fill="#0072c6"/><ellipse cx="8.500" cy="14" rx="3.200" ry="4.500" fill="none" stroke="#fff" stroke-width="2.200"/></svg></button>
  <button aria-label="File Explorer" class="run"><svg width="28" height="26"><path d="M0 1h11l2 3h15v19H0z" fill="#ffd25e"/><path d="M0 1h11l2 3H0z" fill="#e6a20c"/><path d="M5 13h18v12h-5v-6h-8v6H5z" fill="#3e9ce0"/></svg></button>
  <button aria-label="Notepad++"><svg width="28" height="30"><path d="M2 2h20l2 24H3z" fill="#f4f6ee" stroke="#999"/><path d="M3 15q9-5 21-1v12H3z" fill="#59c52b"/><path d="M6 12q6-7 11-1l3 6q-6 5-12 0z" fill="#8be34c" stroke="#245c16"/><path d="M27 2l-6 18" stroke="#cf9a34" stroke-width="2"/></svg></button>
  <button aria-label="Paint" class="run"><svg width="30" height="30"><use href="#palette"/></svg></button>
  <button aria-label="Visual Studio Code" class="run"><svg width="30" height="30"><path d="M22 0l7 3v24l-7 3L8 17l-5 4-2-1V10l2-1 5 4z" fill="#2489ca"/><path d="M22 8v14l-9-7z" fill="#3b3225"/><path d="M22 0l7 3v24l-7 3z" fill="#29a5ee"/><path d="M3 12v6l3-3z" fill="#3b3225"/></svg></button>
  <button aria-label="Sublime Text" class="multi"><svg width="28" height="28"><rect x="1" y="1" width="26" height="26" rx="3" fill="#5d5d5d" stroke="#999"/><path d="M1 22h26v3q0 2-2 2H3q-2 0-2-2z" fill="#bbb"/><path d="M18 6l-8 3v4l8 1v4l-8 2" fill="none" stroke="#ff9a1f" stroke-width="2.800"/></svg></button>
  <button aria-label="Word" class="run"><svg width="28" height="28"><path d="M14 4h13v20H14z" fill="#fff" stroke="#2a5699"/><path d="M17 8h8M17 12h8M17 16h8M17 20h8" stroke="#2a5699" stroke-width="1.500"/><path d="M1 3l15-3v28L1 25z" fill="#2a5699"/><path d="M4 9l2 10 3-9 2 9 3-10" fill="none" stroke="#fff" stroke-width="1.700"/></svg></button>
  <button aria-label="Messenger" class="multi"><svg width="28" height="30"><circle cx="9" cy="8" r="3.500" fill="#44b03f"/><path d="M4 13h10l-2 15H7z" fill="#2f9130"/><circle cx="18" cy="5" r="4.500" fill="#4cb0ee"/><path d="M12 11h13l-2 12-4 6h-3z" fill="#1c7cc0"/></svg></button>
  <button aria-label="GitHub" class="run"><svg width="30" height="30"><circle cx="15" cy="15" r="14" fill="#6b2f86" stroke="#fff"/><path d="M9 7l3 2h6l3-2q1 2 1 4 2 3 0 6-1 2-5 3 2 1 2 3v6h-7v-4q-4 1-5-2l-2-2q3 0 4 2h3q0-2 1-3-5-1-6-4-1-3 1-6 0-2 1-3z" fill="#fff"/></svg></button>
  <button aria-label="Chrome" class="run"><svg width="30" height="30"><circle cx="15" cy="15" r="14" fill="#fbc116"/><path d="M15 15L2.900 8A14 14 0 0 1 27.100 8z" fill="#e33b2e"/><path d="M15 15L2.900 8A14 14 0 0 0 15 29l6-10.500z" fill="#2fa24c"/><path d="M15 8h12.100L21 18z" fill="#fbc116"/><circle cx="15" cy="15" r="6.500" fill="#fff"/><circle cx="15" cy="15" r="5" fill="#4285f4"/></svg></button>
  <button class="tray ms-auto me-2" aria-label="System tray"><svg width="112" height="30" fill="none" stroke="#fff" stroke-width="1.500"><path d="M1 19l7-8 7 8"/><path d="M31 11h12v11H31v-5M43.500 14v5" /><path d="M32.500 13h9v7h-9z" fill="#fff" stroke="none"/><path d="M27 6v4M31 6v4M26 10h6v3h-6zM29 13v5" stroke-width="1.200"/><path d="M62 25q0-15 15-17M66 25q0-11 11-13M70 25q0-7 7-9M74 25q0-3 3-5" stroke-width="1.400"/><path d="M89 12h3l5-5v17l-5-5h-3z"/><path d="M100 12q2 3 0 7"/><path d="M103 9q4 6 0 13M106 7q5 8 0 17" stroke="#8a8377"/></svg></button>
  <div class="clock">6:13 PM<br>7/14/2020</div>
  <button aria-label="Notifications"><svg width="24" height="26"><path d="M2 2h20v17H10l-4 4v-4H2z" fill="#fff"/><path d="M5 7h14M5 11h14M5 15h8" stroke="#352c20" stroke-width="1.500"/><path d="M18 14q4 5-3 8 8 1 8-5-1-3-5-3z" fill="#fff" stroke="#352c20"/></svg></button>
  <span class="peek"></span>
 </div>
</section>
</body>
</html>
